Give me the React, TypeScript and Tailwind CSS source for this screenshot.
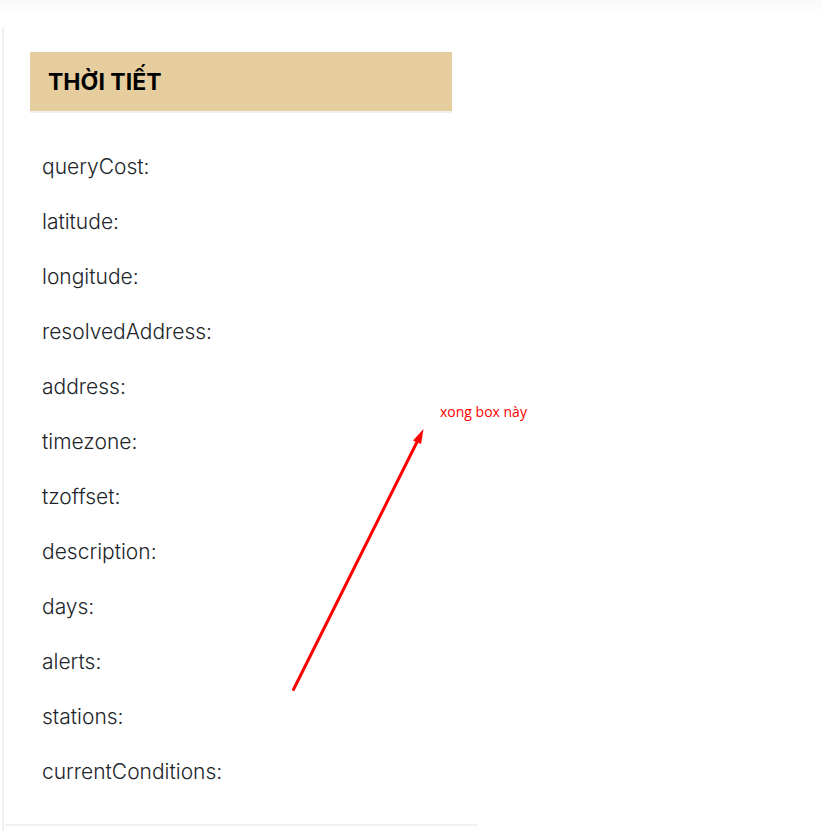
const fields = [
  'queryCost',
  'latitude',
  'longitude',
  'resolvedAddress',
  'address',
  'timezone',
  'tzoffset',
  'description',
  'days',
  'alerts',
  'stations',
  'currentConditions',
];

function WeatherBox() {
  return (
    <section className="w-full max-w-[472px] border-b-2 border-[#f0f0f0] px-[25px] py-[25px]">
      <h2 className="border-b-2 border-[#f0f0f0] bg-[#e5cd9e] pt-[2px] pr-5 pl-[18px] font-['Inter','Liberation_Sans',sans-serif] text-[23px] leading-[57px] font-bold text-black">
        THỜI TIẾT
      </h2>
      <ul className="pt-[26px] pl-3">
        {fields.map((field) => (
          <li
            key={field}
            className="font-['Inter','Liberation_Sans',sans-serif] text-[21px] leading-[55px] font-light text-[#212529]"
          >
            {field}:
          </li>
        ))}
      </ul>
    </section>
  );
}

function Annotation() {
  return (
    <div className="pointer-events-none absolute top-[400px] left-[290px] text-[#ff0000]">
      <svg
        className="absolute top-[28px] left-0"
        width="140"
        height="266"
        viewBox="0 0 140 266"
        aria-hidden="true"
      >
        <path d="M3.5 261.5 127.5 13" stroke="currentColor" strokeWidth="3" strokeLinecap="round" fill="none" />
        <path d="M133.5 1 123 12.5 131 16Z" fill="currentColor" />
      </svg>
      <p className="pl-[150px] font-['Open_Sans','Noto_Sans',sans-serif] text-[14px] leading-6 whitespace-nowrap">
        xong box này
      </p>
    </div>
  );
}

export default function App() {
  return (
    <main className="relative min-h-screen bg-white">
      <div className="h-[27px] bg-linear-to-b from-[#f9f9f9] to-white to-50%" />
      <div className="ml-[2px] min-h-[calc(100vh-27px)] border-l-2 border-[#f0f0f0] pl-px">
        <WeatherBox />
      </div>
      <Annotation />
    </main>
  );
}
